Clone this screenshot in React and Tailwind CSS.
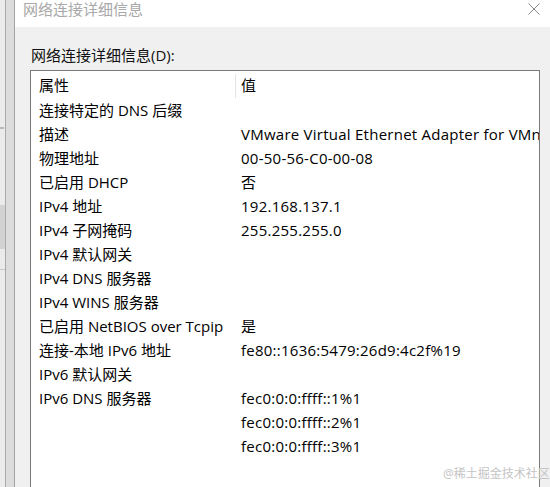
import React from "react";

const rows = [
  ["连接特定的 DNS 后缀", ""],
  ["描述", "VMware Virtual Ethernet Adapter for VMnet8"],
  ["物理地址", "00-50-56-C0-00-08"],
  ["已启用 DHCP", "否"],
  ["IPv4 地址", "192.168.137.1"],
  ["IPv4 子网掩码", "255.255.255.0"],
  ["IPv4 默认网关", ""],
  ["IPv4 DNS 服务器", ""],
  ["IPv4 WINS 服务器", ""],
  ["已启用 NetBIOS over Tcpip", "是"],
  ["连接-本地 IPv6 地址", "fe80::1636:5479:26d9:4c2f%19"],
  ["IPv6 默认网关", ""],
  ["IPv6 DNS 服务器", "fec0:0:0:ffff::1%1"],
  ["", "fec0:0:0:ffff::2%1"],
  ["", "fec0:0:0:ffff::3%1"],
];

const font = {
  fontFamily: '"Open Sans", "Noto Sans CJK SC", sans-serif',
};

export default function App() {
  return (
    <div
      className="relative w-[550px] h-[487px] overflow-hidden flex bg-[#f0f0f0] text-black"
      style={font}
    >
      {/* background window strip */}
      <div className="flex h-full w-[15px] shrink-0">
        <div className="w-[5px] h-full bg-[#ebebeb] flex flex-col">
          <div className="h-[127px]" />
          <div className="h-[2px] w-[4px] bg-[#b8b8b8]" />
          <div className="h-[76px]" />
          <div className="h-[44px] bg-[#d2d2d2]" />
          <div className="h-[20px]" />
          <div className="h-px bg-[#c8c8c8]" />
        </div>
        <div className="w-px h-full bg-[#a9a9a9]" />
        <div className="w-[8px] h-full bg-[#dcdcdc]" />
        <div className="w-px h-full bg-[#a3a3a3]" />
      </div>

      {/* dialog */}
      <div className="w-[535px] shrink-0 flex flex-col">
        <div className="h-[27px] bg-white flex items-start justify-between shrink-0">
          <div className="pl-[8px] text-[15px] leading-[18px] text-[#a8a8a8] whitespace-nowrap">
            网络连接详细信息
          </div>
          <svg
            width="14"
            height="14"
            viewBox="0 0 14 14"
            className="mt-[2px] mr-[9px]"
          >
            <path
              d="M1.5 1.5 L12.5 12.5 M12.5 1.5 L1.5 12.5"
              stroke="#8a8a8a"
              strokeWidth="1"
              fill="none"
            />
          </svg>
        </div>

        <div className="flex-1 flex flex-col pl-[15px] pt-[18px]">
          <div className="pl-[1px] text-[15px] leading-[20px] whitespace-nowrap text-[#111]">
            网络连接详细信息(D):
          </div>
          <div className="mt-[5px] w-[510px] h-[460px] border border-[#7a7a7a] bg-white overflow-hidden">
            <div className="flex h-[27px] items-center text-[15px] pt-[2px]">
              <div className="w-[204px] pl-[8px] shrink-0">属性</div>
              <div className="w-px h-[24px] bg-[#e3e3e3] self-start mt-[1px]" />
              <div className="pl-[5px]">值</div>
            </div>
            {rows.map(([k, v], i) => (
              <div
                key={i}
                className="flex h-[24px] items-center text-[15px] whitespace-nowrap overflow-hidden"
              >
                <div className="w-[205px] pl-[8px] shrink-0">{k}</div>
                <div className="pl-[5px] min-w-0 overflow-hidden tracking-[0.25px]">{v}</div>
              </div>
            ))}
          </div>
        </div>
      </div>

      <div className="absolute left-[443px] top-[466px] text-[12px] leading-[16px] text-[#c4c4c4] whitespace-nowrap">
        @稀土掘金技术社区
      </div>
    </div>
  );
}
